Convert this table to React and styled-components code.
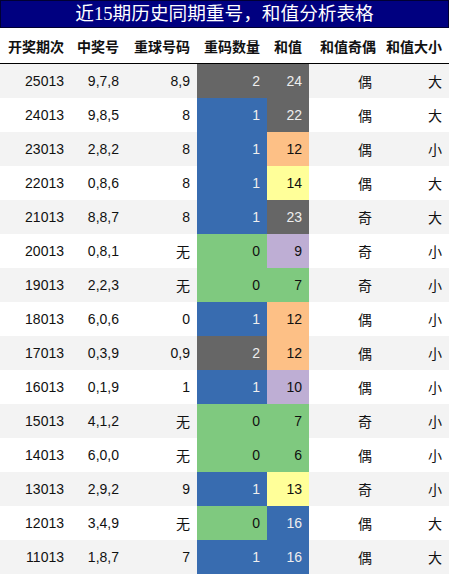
import React from "react";
import styled, { createGlobalStyle } from "styled-components";

const GlobalStyle = createGlobalStyle`
  html, body { margin: 0; padding: 0; background: #ffffff; }
  body { font-family: "Liberation Sans", "Noto Sans CJK SC", sans-serif; }
`;

const Wrap = styled.div`
  width: 449px;
  display: flex;
  flex-direction: column;
`;

const Title = styled.div`
  height: 28px;
  box-sizing: border-box;
  background: #000080;
  border: 1px solid #000033;
  color: #ffffff;
  font-family: "Liberation Serif", "Noto Sans CJK SC", serif;
  font-size: 18.67px;
  line-height: 26px;
  text-align: center;
  white-space: nowrap;
`;

const Table = styled.table`
  width: 449px;
  border-collapse: collapse;
  table-layout: fixed;
  font-size: 14px;
  color: #111111;
`;

const HeadCell = styled.th`
  height: 35px;
  padding: 0 7px 0 0;
  text-align: right;
  font-weight: bold;
  white-space: nowrap;
  background: #ffffff;
  border-bottom: 1px solid #000000;
`;

const Row = styled.tr`
  background: ${(p) => (p.$odd ? "#f3f3f3" : "#ffffff")};
`;

const Cell = styled.td`
  height: 34px;
  padding: 0 ${(p) => p.$pr || 7}px 0 0;
  text-align: right;
  white-space: nowrap;
  background: ${(p) => p.$bg || "transparent"};
  color: ${(p) => p.$fg || "#111111"};
`;

const PALETTE = {
  grey: ["#666666", "#eeeeee"],
  blue: ["#386cb0", "#eeeeee"],
  green: ["#7fc97f", "#111111"],
  orange: ["#fdc086", "#111111"],
  yellow: ["#ffff99", "#111111"],
  purple: ["#beaed4", "#111111"],
};

const countColor = { 2: "grey", 1: "blue", 0: "green" };
const sumColor = (s) => {
  if (s >= 22) return "grey";
  if (s >= 16) return "blue";
  if (s >= 13) return "yellow";
  if (s >= 11) return "orange";
  if (s >= 9) return "purple";
  return "green";
};

const rows = [
  ["25013", "9,7,8", "8,9", 2, 24, "偶", "大"],
  ["24013", "9,8,5", "8", 1, 22, "偶", "大"],
  ["23013", "2,8,2", "8", 1, 12, "偶", "小"],
  ["22013", "0,8,6", "8", 1, 14, "偶", "大"],
  ["21013", "8,8,7", "8", 1, 23, "奇", "大"],
  ["20013", "0,8,1", "无", 0, 9, "奇", "小"],
  ["19013", "2,2,3", "无", 0, 7, "奇", "小"],
  ["18013", "6,0,6", "0", 1, 12, "偶", "小"],
  ["17013", "0,3,9", "0,9", 2, 12, "偶", "小"],
  ["16013", "0,1,9", "1", 1, 10, "偶", "小"],
  ["15013", "4,1,2", "无", 0, 7, "奇", "小"],
  ["14013", "6,0,0", "无", 0, 6, "偶", "小"],
  ["13013", "2,9,2", "9", 1, 13, "奇", "小"],
  ["12013", "3,4,9", "无", 0, 16, "偶", "大"],
  ["11013", "1,8,7", "7", 1, 16, "偶", "大"],
];

const widths = [71, 55, 71, 70, 42, 74, 66];
const heads = ["开奖期次", "中奖号", "重球号码", "重码数量", "和值", "和值奇偶", "和值大小"];

export default function App() {
  return (
    <>
      <GlobalStyle />
      <Wrap>
        <Title>近15期历史同期重号，和值分析表格</Title>
        <Table>
          <colgroup>
            {widths.map((w, i) => (
              <col key={i} style={{ width: w }} />
            ))}
          </colgroup>
          <thead>
            <tr>
              {heads.map((h) => (
                <HeadCell key={h}>{h}</HeadCell>
              ))}
            </tr>
          </thead>
          <tbody>
            {rows.map((r, i) => {
              const [cb, cf] = PALETTE[countColor[r[3]]];
              const [sb, sf] = PALETTE[sumColor(r[4])];
              return (
                <Row key={r[0]} $odd={i % 2 === 0}>
                  <Cell>{r[0]}</Cell>
                  <Cell>{r[1]}</Cell>
                  <Cell>{r[2]}</Cell>
                  <Cell $bg={cb} $fg={cf}>{r[3]}</Cell>
                  <Cell $bg={sb} $fg={sf}>{r[4]}</Cell>
                  <Cell $pr={11}>{r[5]}</Cell>
                  <Cell>{r[6]}</Cell>
                </Row>
              );
            })}
          </tbody>
        </Table>
      </Wrap>
    </>
  );
}
